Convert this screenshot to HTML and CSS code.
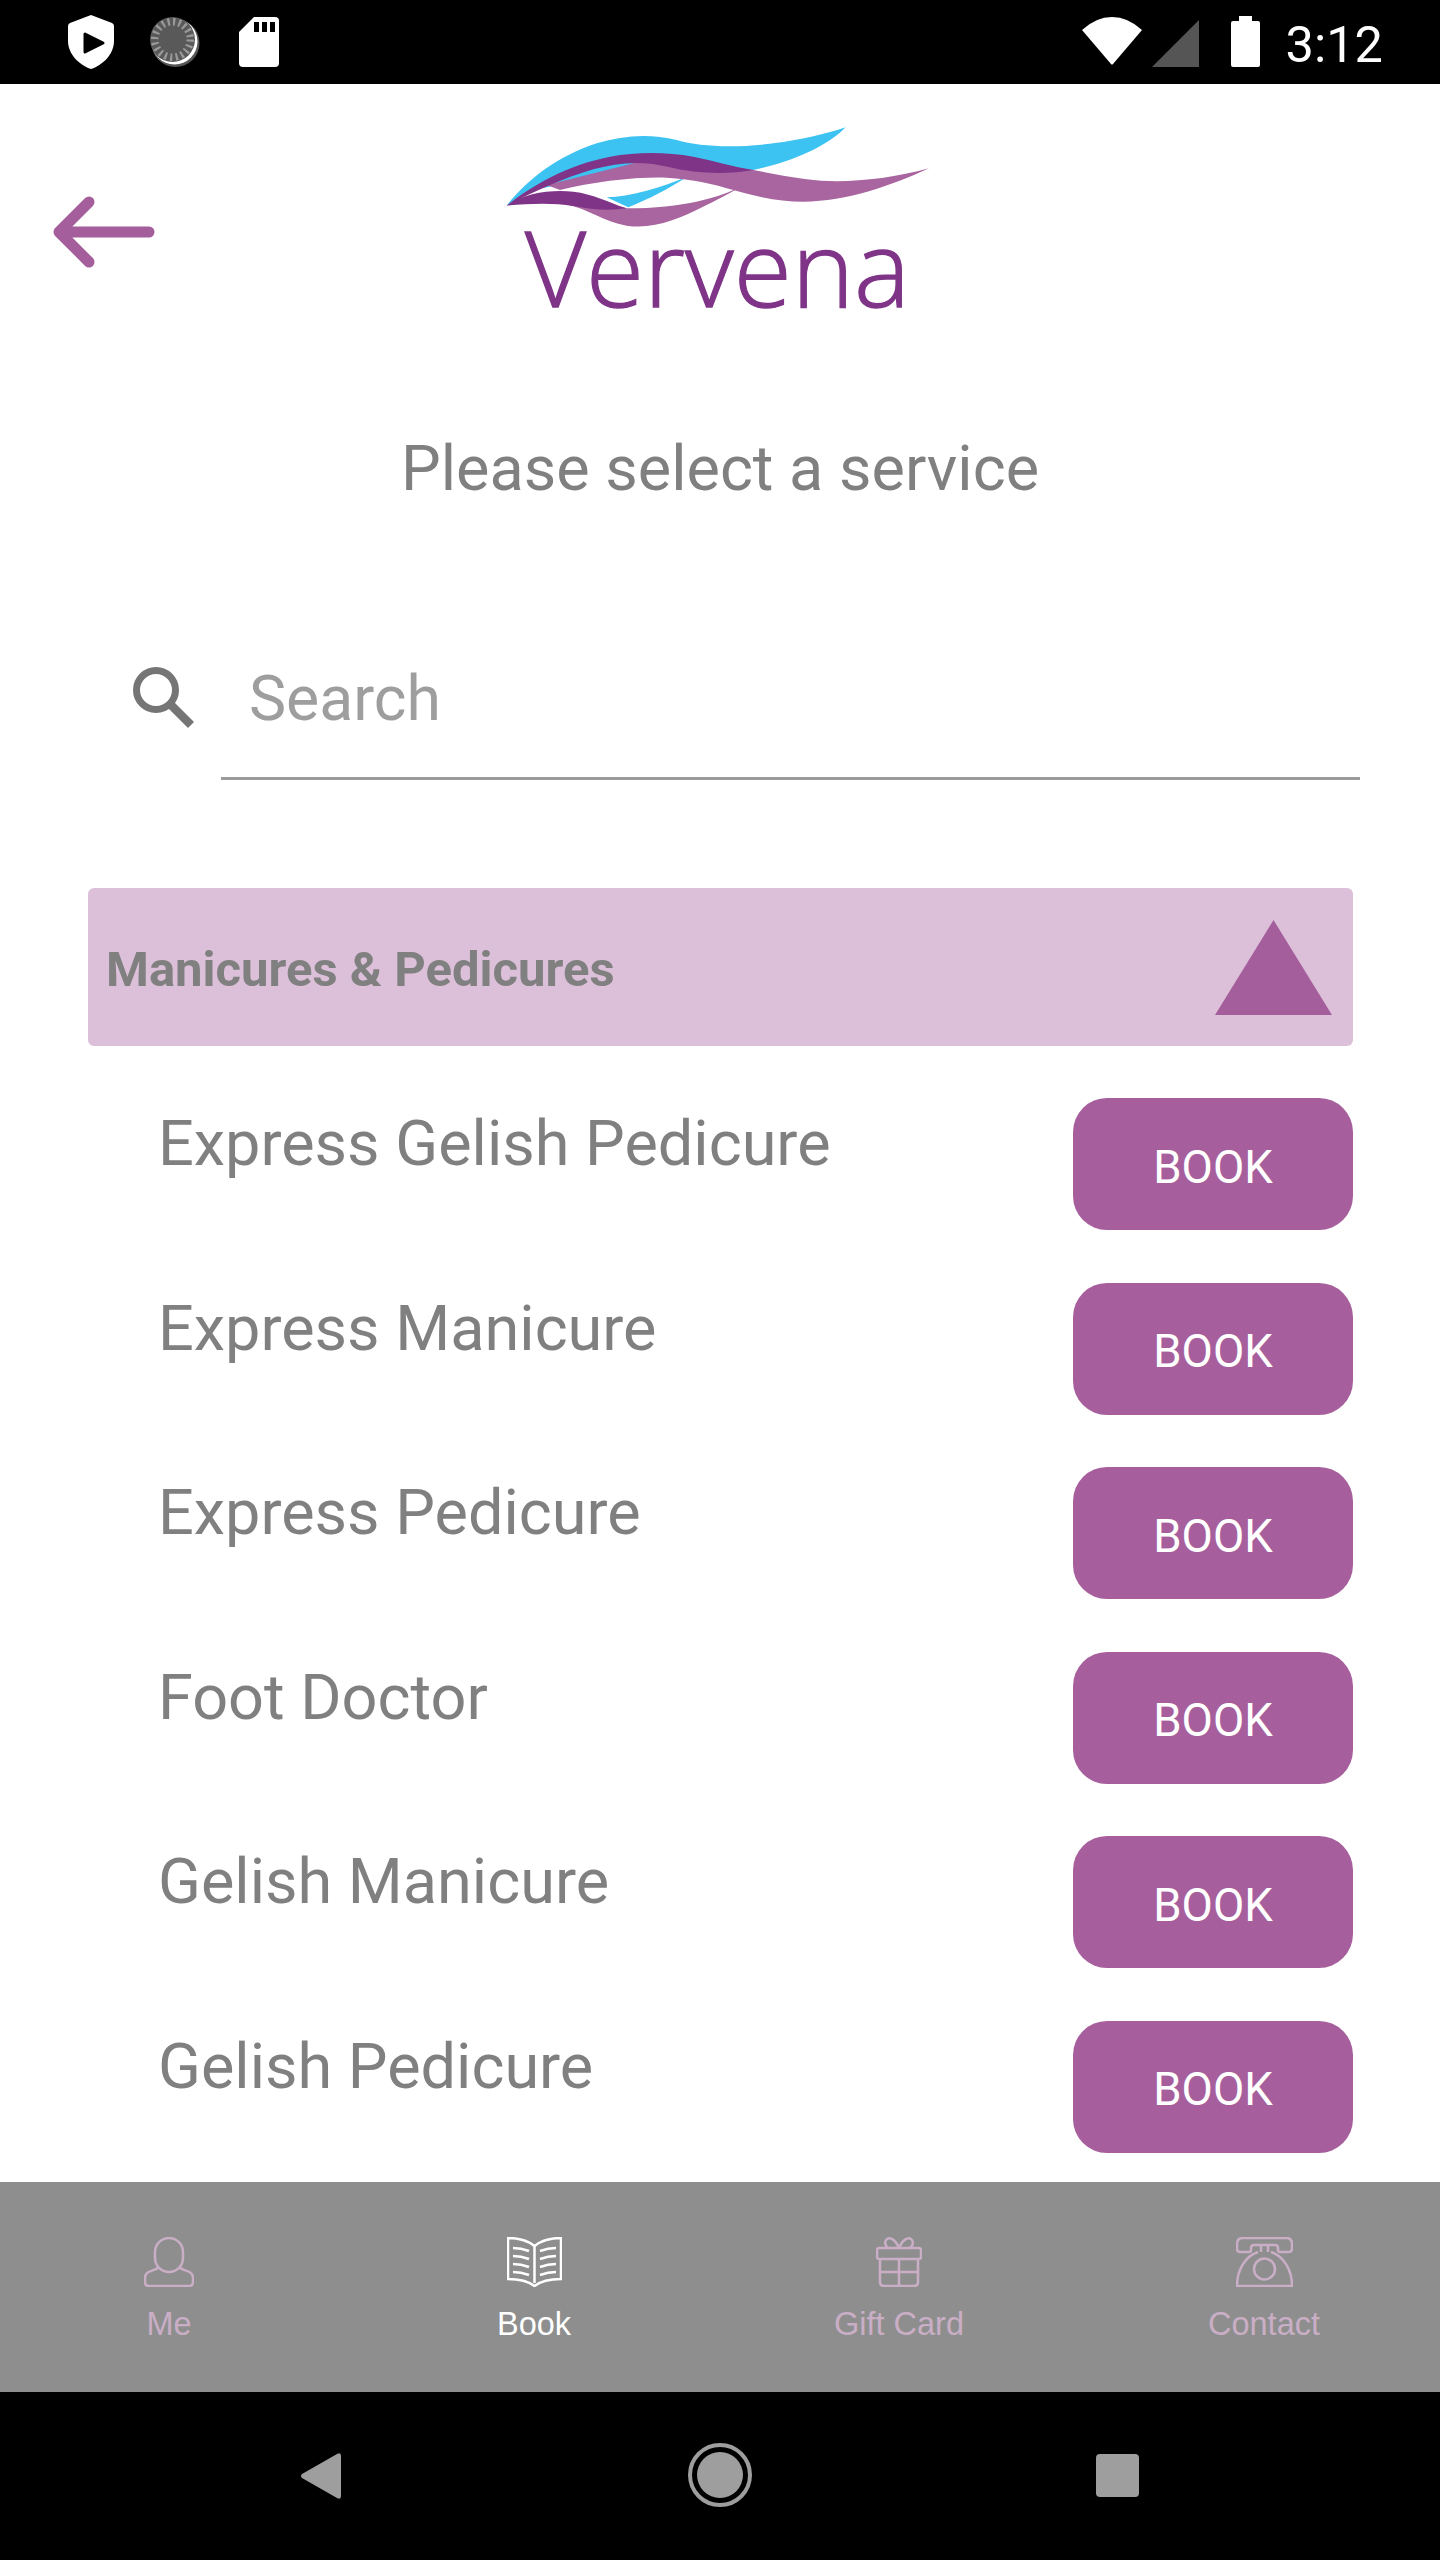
FILE: index.html
```html
<!DOCTYPE html>
<html lang="en">
<head>
<meta charset="utf-8">
<title>Vervena</title>
<link rel="stylesheet" href="styles.css">
</head>
<body>
<div class="app">
  <div class="status">
    <div class="status-left">
      <svg class="i-shield" viewBox="0 0 46 54"><path d="M23 0 L44 8 Q46 9 46 11 V26 C46 39 35 50 23 54 C11 50 0 39 0 26 V11 Q0 9 2 8 Z" fill="#fff"/><path d="M17 19 L35 28 L17 37 Z" fill="#000" stroke="#000" stroke-width="3" stroke-linejoin="round"/></svg>
      <svg class="i-disc" viewBox="0 0 50 50"><circle cx="25.5" cy="26" r="24" fill="#555"/><circle cx="24.5" cy="24.5" r="23" fill="#fff"/><circle cx="22.5" cy="22.5" r="22.5" fill="#595959"/><circle cx="22.5" cy="22.5" r="17.5" fill="none" stroke="#999" stroke-width="8" stroke-dasharray="2.2 3.3"/><circle cx="22.5" cy="22.5" r="14" fill="#595959"/></svg>
      <svg class="i-sd" viewBox="0 0 40 50"><path d="M15 0 H36 Q40 0 40 4 V46 Q40 50 36 50 H4 Q0 50 0 46 V15 Z" fill="#fff"/><path d="M15 5h5v10h-5zM23 5h5v10h-5zM31 5h5v10h-5z" fill="#000"/></svg>
    </div>
    <div class="status-right">
      <svg class="i-wifi" viewBox="0 0 60 48"><path d="M0 13 Q14 0 30 0 Q46 0 60 13 L31 47 Q30 48 29 47 Z" fill="#fff"/></svg>
      <svg class="i-signal" viewBox="0 0 47 47"><path d="M0 47 L47 0 V47 Z" fill="#555"/></svg>
      <svg class="i-battery" viewBox="0 0 29 51"><path d="M8 0 H21 V5 H27 Q29 5 29 7 V49 Q29 51 27 51 H2 Q0 51 0 49 V7 Q0 5 2 5 H8 Z" fill="#fff"/></svg>
      <span class="clock">3:12</span>
    </div>
  </div>

  <div class="header">
    <svg class="back" viewBox="0 0 102 72"><path d="M6 36 H96 M36 6 L6 36 L36 66" fill="none" stroke="#a55e9c" stroke-width="11" stroke-linecap="round" stroke-linejoin="round"/></svg>
    <svg class="logo" viewBox="0 0 1410 690">
      <path d="M80 287 C140 210 230 140 350 100 C430 75 510 70 590 90 C660 110 760 115 880 100 C960 90 1040 72 1097 52 C1050 100 960 150 820 180 L500 170 L160 240 Z" fill="#3cc3f2"/>
      <path d="M625 198 C560 240 510 265 445 292 L380 262 C450 260 540 235 625 198 Z" fill="#3cc3f2"/>
      <path d="M240 240 C340 215 470 200 560 203 C640 207 700 222 760 240 C840 263 900 275 970 275 C1100 275 1240 225 1347 175 C1220 210 1080 222 980 208 C920 200 870 190 820 180 L500 150 L200 225 Z" fill="#a8659f"/>
      <path d="M80 287 C150 230 260 165 390 140 C470 125 560 125 640 140 C700 152 760 170 820 180 C740 195 640 190 570 172 C490 152 420 155 340 178 C250 205 160 245 80 287 Z" fill="#7f3488"/>
      <path d="M265 285 C320 295 370 335 440 347 C520 360 600 325 660 295 C710 270 750 250 788 227 C720 262 610 295 440 295 L300 260 Z" fill="#a8659f"/>
      <path d="M80 287 C130 250 210 238 280 245 C340 252 380 275 440 295 C390 302 340 300 280 288 C220 278 150 280 80 287 Z" fill="#7f3488"/>
      <text class="logo-word" x="135" y="590" textLength="1155" lengthAdjust="spacingAndGlyphs">Vervena</text>
    </svg>
  </div>

  <div class="title">Please select a service</div>

  <div class="search">
    <svg class="i-search" viewBox="0 0 61 61"><circle cx="23" cy="23" r="19.5" fill="none" stroke="#757575" stroke-width="7"/><path d="M38 38 L58 58" stroke="#757575" stroke-width="8.5" fill="none"/></svg>
    <div class="search-field"><span class="search-text">Search</span></div>
  </div>

  <div class="section">
    <span class="section-name">Manicures &amp; Pedicures</span>
    <svg class="i-tri" viewBox="0 0 117 95"><path d="M58.5 0 L117 95 H0 Z" fill="#a55e9c"/></svg>
  </div>

  <div class="list">
    <div class="row"><span class="row-name">Express Gelish Pedicure</span><span class="book">BOOK</span></div>
    <div class="row"><span class="row-name">Express Manicure</span><span class="book">BOOK</span></div>
    <div class="row"><span class="row-name">Express Pedicure</span><span class="book">BOOK</span></div>
    <div class="row"><span class="row-name">Foot Doctor</span><span class="book">BOOK</span></div>
    <div class="row"><span class="row-name">Gelish Manicure</span><span class="book">BOOK</span></div>
    <div class="row"><span class="row-name">Gelish Pedicure</span><span class="book">BOOK</span></div>
  </div>

  <div class="tabs">
    <div class="tab">
      <svg class="tab-icon" viewBox="0 0 50 50"><rect x="11" y="1" width="28" height="34" rx="14" fill="none"/><path d="M15 30 C10 35 1 33 1 41 V45 Q1 49 5 49 H45 Q49 49 49 45 V41 C49 33 40 35 35 30" fill="none"/></svg>
      <span>Me</span>
    </div>
    <div class="tab active">
      <svg class="tab-icon" viewBox="0 0 55 50"><path d="M27.5 9 C20 3 10 1 1 1 V42 C10 42 21 44 27.5 49 C34 44 45 42 54 42 V1 C45 1 35 3 27.5 9 Z M27.5 9 V46" fill="none"/><path d="M6 11 Q14 11 22 14 M6 19 Q14 19 22 22 M6 27 Q14 27 22 30 M6 35 Q14 35 22 38 M49 11 Q41 11 33 14 M49 19 Q41 19 33 22 M49 27 Q41 27 33 30 M49 35 Q41 35 33 38" fill="none"/></svg>
      <span>Book</span>
    </div>
    <div class="tab">
      <svg class="tab-icon" viewBox="0 0 46 50"><path d="M23 11 C19 2 14 0 11 2 C8 4 9 9 12 11 M23 11 C27 2 32 0 35 2 C38 4 37 9 34 11" fill="none"/><rect x="1" y="11" width="44" height="11" rx="2" fill="none"/><path d="M4 22 V45 Q4 49 8 49 H38 Q42 49 42 45 V22 M23 22 V49 M4 35 H42" fill="none"/></svg>
      <span>Gift Card</span>
    </div>
    <div class="tab">
      <svg class="tab-icon" viewBox="0 0 57 50"><path d="M7 1 H50 Q56 1 56 7 V12 Q56 15 53 15 H44 Q42 15 42 13 V11 Q42 8 39 8 H18 Q15 8 15 11 V13 Q15 15 13 15 H4 Q1 15 1 12 V7 Q1 1 7 1 Z" fill="none"/><path d="M22 15 C10 19 1 32 1 49 H56 C56 32 47 19 35 15 M25 15 V9 M32 15 V9" fill="none"/><circle cx="28.5" cy="32" r="10.5" fill="none"/></svg>
      <span>Contact</span>
    </div>
  </div>

  <div class="sysnav">
    <svg class="i-navback" viewBox="0 0 40 46"><path d="M1 21 L36 1 Q40 -1 40 3 V43 Q40 47 36 45 L1 25 Q-1 23 1 21 Z" fill="#9e9e9e"/></svg>
    <svg class="i-navhome" viewBox="0 0 64 64"><circle cx="32" cy="32" r="30" fill="none" stroke="#9e9e9e" stroke-width="4"/><circle cx="32" cy="32" r="23" fill="#9e9e9e"/></svg>
    <div class="navsquare"></div>
  </div>
</div>
</body>
</html>
```
FILE: styles.css
```css
* { box-sizing: border-box; }
html, body { margin: 0; padding: 0; background: #fff; }
body { font-family: Roboto, "Liberation Sans", sans-serif; }
.app { width: 1440px; height: 2560px; display: flex; flex-direction: column; overflow: hidden; background: #fff; }
svg { display: block; flex: none; }

.status { height: 84px; background: #000; display: flex; justify-content: space-between; align-items: flex-start; flex: none; }
.status-left { display: flex; align-items: flex-start; padding: 15px 0 0 68px; }
.i-shield { width: 46px; height: 54px; }
.i-disc { width: 50px; height: 50px; margin: 2px 0 0 36px; }
.i-sd { width: 40px; height: 50px; margin: 2px 0 0 39px; }
.status-right { display: flex; align-items: flex-start; padding: 16px 57px 0 0; }
.i-wifi { width: 60px; height: 48px; margin-top: 1px; }
.i-signal { width: 47px; height: 47px; margin: 4px 0 0 10px; }
.i-battery { width: 29px; height: 51px; margin-left: 32px; }
.clock { font-size: 50.5px; line-height: 58px; color: #fff; margin-left: 26px; }

.header { display: flex; align-items: flex-start; padding: 26px 0 0 53px; height: 236px; flex: none; }
.back { width: 102px; height: 72px; margin-top: 86px; }
.logo { width: 470px; height: 230px; margin-left: 325px; }
.logo-word { font-family: "Open Sans", sans-serif; font-weight: 300; font-size: 315px; fill: #7f3488; stroke: #7f3488; stroke-width: 4px; }

.title { font-size: 63px; line-height: 70px; color: #808080; text-align: center; margin-top: 114px; flex: none; }

.search { display: flex; align-items: flex-start; padding-left: 133px; margin-top: 163px; flex: none; }
.i-search { width: 61px; height: 61px; }
.search-field { width: 1139px; margin: -6px 0 0 27px; height: 119px; border-bottom: 3px solid #9a9a9a; padding: 3px 0 0 28px; }
.search-text { font-size: 62.5px; line-height: 70px; color: #9e9e9e; display: block; }

.section { margin: 108px 87px 0 88px; height: 158px; background: #dcc0d9; border-radius: 6px; display: flex; align-items: center; justify-content: space-between; padding: 0 21px 0 18px; flex: none; }
.section-name { font-size: 49px; font-weight: 700; color: #808080; line-height: 58px; margin-top: 6px; }
.i-tri { width: 117px; height: 95px; }

.list { display: flex; flex-direction: column; gap: 52.6px; margin-top: 52px; padding: 0 87px 0 158px; flex: none; }
.row { display: flex; justify-content: space-between; align-items: flex-start; height: 132px; }
.row-name { font-size: 63px; line-height: 70px; color: #808080; margin-top: 11px; }
.book { width: 280px; height: 132px; background: #a65f9c; border-radius: 34px; color: #fff; font-size: 45.5px; padding-top: 6px; display: flex; align-items: center; justify-content: center; }

.tabs { position: absolute; top: 2182px; left: 0; width: 1440px; height: 210px; background: #8e8e8e; display: grid; grid-template-columns: repeat(4, 220px); column-gap: 145px; padding: 55px 0 0 59px; }
.tab { display: flex; flex-direction: column; align-items: center; color: #c9aec6; font-family: "Liberation Sans", Arial, sans-serif; font-size: 32.5px; line-height: 38px; }
.tab span { margin-top: 18px; }
.tab.active { color: #fff; }
.tab-icon { height: 50px; stroke: currentColor; stroke-width: 2.5; }

.sysnav { position: absolute; top: 2392px; left: 0; width: 1440px; height: 168px; background: #000; display: flex; align-items: flex-start; padding: 51px 0 0 301px; }
.i-navback { width: 40px; height: 46px; margin-top: 10px; }
.i-navhome { width: 64px; height: 64px; margin-left: 347px; }
.navsquare { width: 43px; height: 43px; margin: 11px 0 0 344px; background: #9e9e9e; border-radius: 4px; }
```
